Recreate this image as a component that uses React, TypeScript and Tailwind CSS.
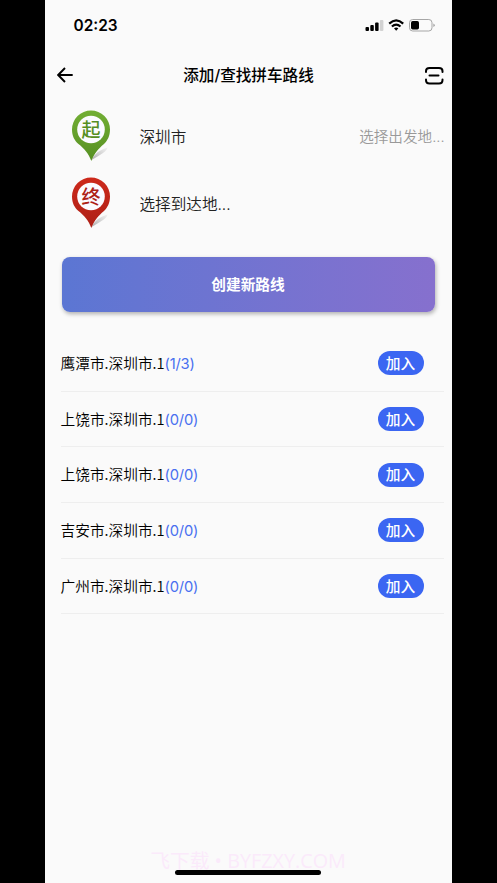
import React from 'react';

const routes = [
  { name: '鹰潭市.深圳市.1', count: '(1/3)' },
  { name: '上饶市.深圳市.1', count: '(0/0)' },
  { name: '上饶市.深圳市.1', count: '(0/0)' },
  { name: '吉安市.深圳市.1', count: '(0/0)' },
  { name: '广州市.深圳市.1', count: '(0/0)' },
];

type PinProps = { label: string; color: string; dark: string; id: string };

const Pin = ({ label, color, dark, id }: PinProps) => (
  <svg width="42" height="54" viewBox="0 0 42 54" className="mb-[2px] shrink-0">
    <defs>
      <linearGradient id={id} x1="0" y1="0" x2="0" y2="1">
        <stop offset="0" stopColor={color} />
        <stop offset="1" stopColor={dark} />
      </linearGradient>
      <linearGradient id={id + '-shadow'} x1="0" y1="1" x2="1" y2="0">
        <stop offset="0" stopColor="#777" stopOpacity="0.6" />
        <stop offset="1" stopColor="#999" stopOpacity="0.1" />
      </linearGradient>
    </defs>
    <path d="M21.5 51 C25 44 30 41 37.500 38.500 C37.500 42 30 46 21.500 51Z" fill={'url(#' + id + '-shadow)'} />
    <path
      d="M21 1.500 A19 19 0 0 1 40 20.500 C40 27 37.500 31.500 34 35 C28 40 24.500 44 21.300 52 C18.500 44 14.500 40 8.500 35 C4.500 31.500 2 27 2 20.500 A19 19 0 0 1 21 1.500Z"
      fill={'url(#' + id + ')'}
    />
    <circle cx="21" cy="20.500" r="13.800" fill="#fbfbff" />
    <text x="21" y="27.500" textAnchor="middle" fontSize="19" fontWeight="500" fill={dark}>{label}</text>
  </svg>
);

const StatusBar = () => (
  <div className="flex h-[50px] items-center justify-between pl-[29px] pr-[16px]">
    <span className="pt-px text-[15.4px] font-semibold leading-none">02:23</span>
    <svg width="71" height="14" viewBox="0 0 71 14">
      <rect x="0.500" y="9" width="3.500" height="4" rx="1" />
      <rect x="5.300" y="7" width="3.500" height="6" rx="1" />
      <rect x="10.100" y="4.500" width="3.500" height="8.500" rx="1" />
      <rect x="14.900" y="2" width="3.500" height="11" rx="1" fill="#d2d2d2" />
      <g fill="none" stroke="#000" strokeWidth="2.200">
        <path d="M24.200 5.600 Q31.200 -0.800 38.200 5.600" />
        <path d="M26.900 8.500 Q31.200 4.700 35.500 8.500" />
      </g>
      <path d="M29 10.300 Q31.200 8.700 33.400 10.300 L31.200 12.700Z" />
      <rect x="44.500" y="1.500" width="22.500" height="11.500" rx="3.200" fill="none" stroke="#a6a6a6" />
      <rect x="46" y="3" width="8" height="8.500" rx="1.700" />
      <path d="M68.300 5.500 Q71.300 7.200 68.300 9Z" fill="#a6a6a6" />
    </svg>
  </div>
);

const Header = () => (
  <div className="flex h-[51px] items-center justify-between pl-[12px] pr-[7px]">
    <svg width="18" height="18" viewBox="0 0 18 18" fill="none" stroke="#000" strokeWidth="1.9">
      <path d="M8 1 L1.200 8 L8 15 M1.400 8 H15.700" />
    </svg>
    <h1 className="mr-[2px] pt-px text-[15.6px] font-medium leading-none">添加/查找拼车路线</h1>
    <svg width="20" height="20" viewBox="0 0 20 20" fill="none" stroke="#000" strokeWidth="2" strokeLinecap="round">
      <path d="M2 6 V5 Q2 2 5.500 2 H15 Q18.500 2 18.500 5 V6" />
      <path d="M2 13.500 V14 Q2 17.500 5.500 17.500 H15 Q18.500 17.500 18.500 14 V13.500" />
      <path d="M5.500 9.500 H14.500" />
    </svg>
  </div>
);

const App = () => {
  return (
    <div className="flex h-[883px] w-[497px] justify-center overflow-hidden bg-black pr-px font-[Inter,'Noto_Sans_CJK_SC',sans-serif]">
      <main className="flex w-[407px] flex-col bg-[#fafafa] text-black">
        <StatusBar />
        <Header />
        <section className="pt-[2px] text-[15.6px] text-[#222]">
          <div className="flex h-[67px] items-center pl-[25px] pr-[7px]">
            <Pin label="起" color="#72ae34" dark="#568f22" id="start" />
            <span className="ml-[28px] flex-1 pt-[2px] font-[350]">深圳市</span>
            <span className="pt-[2px] text-[14.6px] font-[350] text-[#999]">选择出发地...</span>
          </div>
          <div className="flex h-[67px] items-center pl-[25px]">
            <Pin label="终" color="#cd291b" dark="#ad2016" id="end" />
            <span className="ml-[28px] pt-[2px] font-[350]">选择到达地...</span>
          </div>
        </section>
        <button className="mx-[17px] mt-[19.5px] h-[55px] shrink-0 rounded-[8px] bg-linear-to-r from-[#5b76d3] to-[#8670ce] pt-[3px] text-[14.7px] font-bold text-white shadow-[1px_2px_4px_rgba(0,0,0,0.3)]">
          创建新路线
        </button>
        <ul className="ml-[16px] mr-[8px] mt-[24.5px]">
          {routes.map((route, i) => (
            <li key={i} className="flex h-[55.7px] items-center justify-between border-b border-[#eeeeee] pr-[20px] text-[14.7px]">
              <span className="font-['Noto_Sans_CJK_SC',sans-serif] font-[350]">
                {route.name}
                <span className="font-[Inter,sans-serif] font-normal tracking-[-0.2px] text-[#486ff0]">{route.count}</span>
              </span>
              <button className="flex h-[24px] w-[46px] items-center justify-center rounded-full bg-[#3b66f2] pt-px text-[14.7px] font-medium text-white">加入</button>
            </li>
          ))}
        </ul>
        <footer className="mt-auto flex h-[36px] flex-col items-center">
          <span className="h-[23px] whitespace-nowrap font-['Open_Sans','Noto_Sans_CJK_SC',sans-serif] text-[19.8px] leading-[28px] text-[#faeafa]">飞下载 • BYFZXY.COM</span>
          <div className="z-10 h-[5px] w-[146px] rounded-full bg-black" />
        </footer>
      </main>
    </div>
  );
};

export default App;
